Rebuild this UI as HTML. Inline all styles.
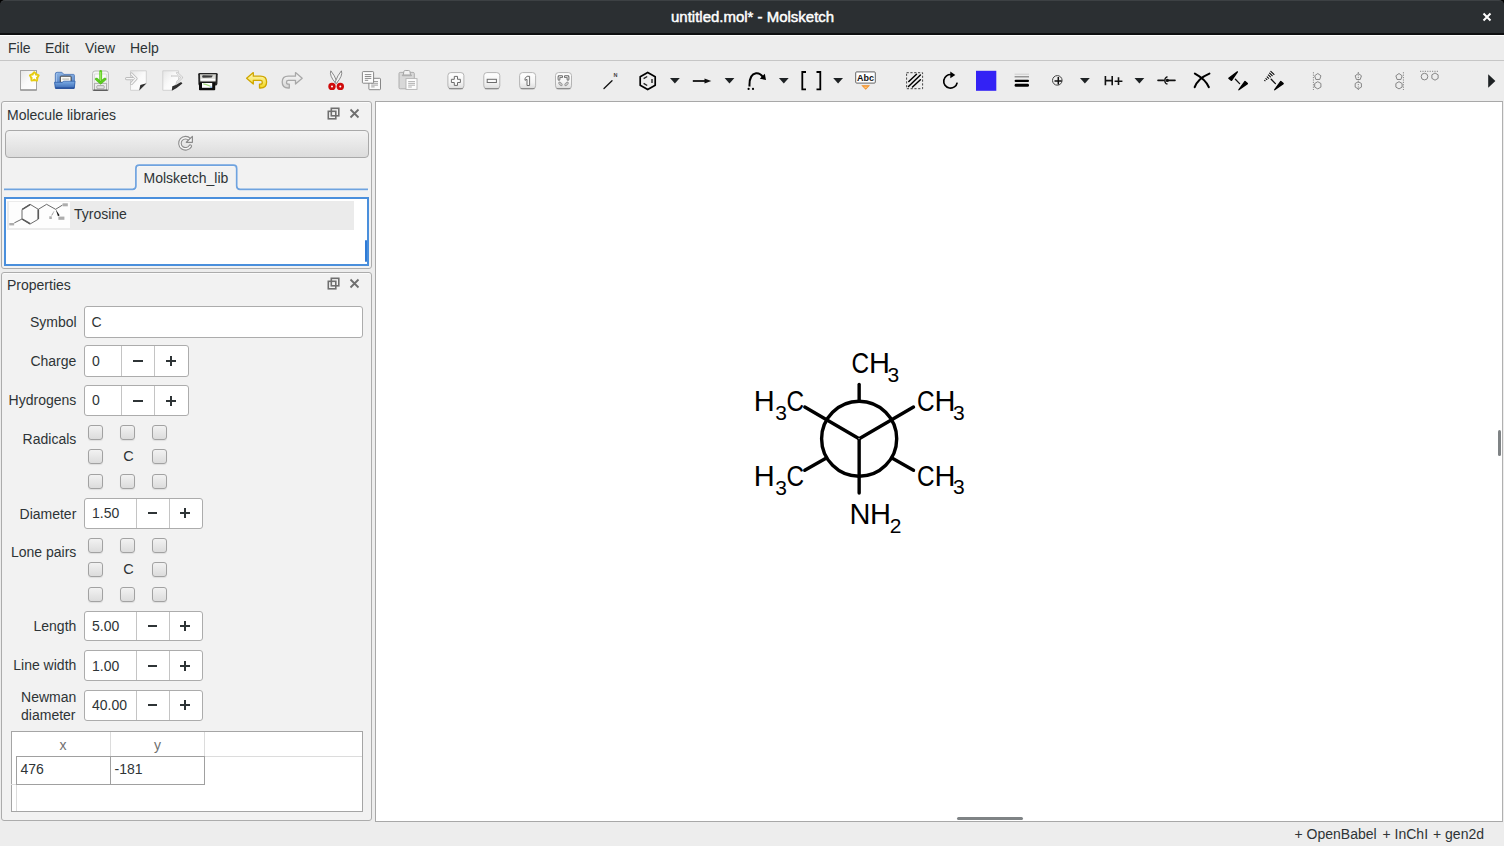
<!DOCTYPE html>
<html><head><meta charset="utf-8">
<style>
*{margin:0;padding:0;box-sizing:border-box}
html,body{width:1504px;height:846px;overflow:hidden;background:#ededed;font-family:"Liberation Sans",sans-serif;color:#2e3436;font-size:14px}
.a{position:absolute}
.t{position:absolute;white-space:nowrap;line-height:1}
svg{overflow:visible}
#title{left:0;top:0;width:1504px;height:35px;background:#2b2f32;border-top:1px solid #3d4144;border-bottom:2px solid #0e0f10;border-radius:5px 5px 0 0}
#menu{left:0;top:35px;width:1504px;height:26px;background:#ededed;border-top:1px solid #fff;border-bottom:1px solid #c6c6c6}
.dock{position:absolute;background:#f2f2f2;border:1px solid #acacac;border-radius:3px;box-shadow:inset 0 1px 0 #fbfbfb}
.spin{position:absolute;background:#fff;border:1px solid #acacac;border-radius:3px}
.cb{position:absolute;width:15px;height:15px;border:1px solid #a2a2a2;border-radius:3px;background:linear-gradient(#f2f2f2,#dcdcdc);box-shadow:0 1px 1px rgba(0,0,0,0.08)}
</style></head><body>
<div class="a" style="left:0;top:0;width:1504px;height:8px;background:#000"></div>
<div id="title" class="a"></div>
<div class="t" style="left:671.3px;top:10px;font-size:14.5px;color:#fff;-webkit-text-stroke:0.45px #fff;transform:scaleX(1.033);transform-origin:0 0">untitled.mol* - Molsketch</div>
<svg class="a" style="left:1480px;top:10px" width="14" height="14"><path d="M3.5 3.5 L10.5 10.5 M10.5 3.5 L3.5 10.5" stroke="#fff" stroke-width="2"/></svg>
<div id="menu" class="a"></div>
<div class="t" style="left:8px;top:41px">File</div>
<div class="t" style="left:45px;top:41px">Edit</div>
<div class="t" style="left:85px;top:41px">View</div>
<div class="t" style="left:130px;top:41px">Help</div>
<svg class="a" style="left:0;top:60px" width="1504" height="40" viewBox="0 60 1504 40"><defs>
<linearGradient id="gPage" x1="0" y1="0" x2="1" y2="1"><stop offset="0" stop-color="#e6e6e6"/><stop offset="0.5" stop-color="#fafafa"/><stop offset="1" stop-color="#ffffff"/></linearGradient>
<linearGradient id="gFold" x1="0" y1="0" x2="0" y2="1"><stop offset="0" stop-color="#7eaee6"/><stop offset="1" stop-color="#3a6ab5"/></linearGradient>
<linearGradient id="gFoldB" x1="0" y1="0" x2="0" y2="1"><stop offset="0" stop-color="#8cb4e4"/><stop offset="1" stop-color="#4d7cc4"/></linearGradient>
<linearGradient id="gBtn" x1="0" y1="0" x2="0" y2="1"><stop offset="0" stop-color="#ffffff"/><stop offset="0.6" stop-color="#f4f4f4"/><stop offset="1" stop-color="#dcdcdc"/></linearGradient>
<linearGradient id="gYel" x1="0" y1="0" x2="0" y2="1"><stop offset="0" stop-color="#fff9c0"/><stop offset="1" stop-color="#f2d820"/></linearGradient>
<linearGradient id="gGray" x1="0" y1="0" x2="0" y2="1"><stop offset="0" stop-color="#fafafa"/><stop offset="1" stop-color="#d6d6d6"/></linearGradient>
<linearGradient id="gGreen" x1="0" y1="0" x2="1" y2="0"><stop offset="0" stop-color="#4fc21a"/><stop offset="0.5" stop-color="#8ee84a"/><stop offset="1" stop-color="#45b512"/></linearGradient>
</defs>
<rect x="20.5" y="70.5" width="16" height="19.5" fill="url(#gPage)" stroke="#a3a3a3" stroke-width="1"/>
<path d="M20.5 90 H36.5" stroke="#8d8d8d" stroke-width="1.2"/>
<path d="M34.30 72.20 L36.18 74.21 L38.67 75.38 L37.34 77.79 L37.00 80.52 L34.30 80.00 L31.60 80.52 L31.26 77.79 L29.93 75.38 L32.42 74.21 Z" fill="#ecd21a" stroke="#e6cc12" stroke-width="2" stroke-linejoin="round"/><path d="M34.30 73.30 L35.30 75.52 L37.72 75.79 L35.92 77.43 L36.42 79.81 L34.30 78.60 L32.18 79.81 L32.68 77.43 L30.88 75.79 L33.30 75.52 Z" fill="#fff"/>
<path d="M55.3 87.5 L55.3 74 Q55.3 72.3 57 72.3 L61.3 72.3 Q62.3 72.3 63 73.4 L63.6 74.4 L73.4 74.4 Q74.4 74.4 74.4 75.4 L74.4 87.5 Z" fill="url(#gFoldB)" stroke="#4470b5" stroke-width="0.8"/>
<path d="M56.5 86 V74.5 Q56.5 73.5 57.5 73.5" fill="none" stroke="#a9c8ee" stroke-width="0.8"/>
<rect x="60.3" y="76.2" width="10.8" height="6.4" rx="0.6" fill="#fbfaf6" stroke="#2e2e2e" stroke-width="0.9"/>
<path d="M62.3 79.1 H69.2" stroke="#a8a8a0" stroke-width="0.9"/>
<path d="M54.5 82.3 L62.2 82.3 Q63 81.2 64.2 81.2 L75.1 81.2 L74.2 88.4 L55.5 88.4 Z" fill="url(#gFold)" stroke="#2f5ea8" stroke-width="0.8" stroke-linejoin="round"/>
<path d="M55.5 88.1 H74.2" stroke="#1d4592" stroke-width="1.1"/>
<path d="M92.6 90.3 L92.6 73.6 Q92.6 71 95 71 L106 71 Q108.4 71 108.4 73.6 L108.4 90.3 Z" fill="#f6f6f6" stroke="#b2b2b2" stroke-width="0.9"/>
<path d="M94.6 82.6 V74 H106.4 V82.6" fill="#fbfbfb" stroke="#d0d0d0" stroke-width="0.7"/>
<path d="M94.4 83.3 H106.6 V90 H94.4 Z" fill="#ececec" stroke="#8a8a8a" stroke-width="0.7"/>
<path d="M93.2 90.2 H107.8" stroke="#3a3a3a" stroke-width="1"/>
<rect x="96.8" y="85.6" width="7.4" height="3.2" rx="0.8" fill="#e2e2e2" stroke="#8f8f8f" stroke-width="0.7"/>
<path d="M100.7 71.4 L100.7 81" stroke="#5ccd1e" stroke-width="2.8" stroke-linecap="round"/>
<path d="M95.6 78.2 Q97.4 77.8 98.2 79 L100.7 81.2 L103.2 79 Q104 77.8 105.8 78.2 Q106.6 78.8 105.8 80 L100.7 84.2 L95.6 80 Q94.8 78.8 95.6 78.2 Z" fill="#5ccd1e" stroke="#43ae10" stroke-width="0.6"/>
<path d="M100.7 72 V81" stroke="#b4f080" stroke-width="0.8"/>
<path d="M130.5 70.8 L146.3 70.8 L146.3 83.5 L139.2 90.3 L130.5 90.3 Z" fill="url(#gPage)" stroke="#cfcfcf" stroke-width="0.9"/>
<path d="M139.2 90.5 L146.5 83.3 L140.3 85 Z" fill="#2e2e2e"/>
<path d="M126.6 78.6 H133.5 M131.5 74 L136 78.6 L131.5 83.4" fill="none" stroke="#bdbdbd" stroke-width="3.2" stroke-linecap="round" stroke-linejoin="round"/>
<path d="M126.6 78.6 H133.5 M131.5 74 L136 78.6 L131.5 83.4" fill="none" stroke="#f7f7f7" stroke-width="1.4" stroke-linecap="round" stroke-linejoin="round"/>
<path d="M162.8 70.8 L178.5 70.8 L178.5 80 L171.6 90.3 L162.8 90.3 Z" fill="url(#gPage)" stroke="#cfcfcf" stroke-width="0.9"/>
<path d="M171.8 90.7 Q177 88.5 182.4 83.6 Q182 82.2 180.5 82.3 Q176 85.5 172.3 86.2 Z" fill="#2f2f2f"/>
<path d="M172 76 H179 M177 72.8 L182 77.5 L177 82.4" fill="none" stroke="#c8c8c8" stroke-width="2.2" stroke-linecap="round" stroke-linejoin="round"/>
<path d="M172 76 H179 M177 72.8 L182 77.5 L177 82.4" fill="none" stroke="#fafafa" stroke-width="0.9" stroke-linecap="round" stroke-linejoin="round"/>
<defs><linearGradient id="gPr" x1="0" y1="0" x2="0" y2="1"><stop offset="0" stop-color="#cfcfca"/><stop offset="0.6" stop-color="#e4e4e0"/><stop offset="0.72" stop-color="#ffffff"/><stop offset="1" stop-color="#d8d8d4"/></linearGradient></defs>
<path d="M198.2 74.2 Q198.2 72.9 199.6 72.9 L216.3 72.9 Q217.7 72.9 217.7 74.2 L217.4 84 Q217 85.5 215.6 85.5 L199.8 85.5 Q198.5 85.5 198.4 84 Z" fill="#262626"/>
<path d="M200 74.3 L215.9 74.3 L215.6 81.6 L200.3 81.6 Z" fill="url(#gPr)"/>
<path d="M202.2 76.2 Q202.2 75.3 203.2 75.3 L212.8 75.4 L211.6 77.6 L203.2 77.8 Q202.2 77.8 202.2 77 Z" fill="#3c3c3c"/>
<rect x="199" y="82.6" width="16.2" height="7.6" rx="0.8" fill="#0c0c0c"/>
<rect x="202" y="83" width="10.2" height="4.8" fill="#fdfdfd"/>
<path d="M203.2 83.8 Q206 84.2 210.5 86.3" stroke="#a6dc80" stroke-width="1.2" fill="none"/>
<rect x="210.2" y="86.6" width="1.6" height="1.2" fill="#6aa0e8"/>
<path d="M246.6 78.3 L253.3 72.6 L253.3 76.2 L260.5 76.2 Q266.6 76.2 266.6 82 Q266.6 88 260.5 88 L259.5 88 L259.5 84.2 L260.5 84.2 Q262.3 84.2 262.3 82.2 Q262.3 80.4 260.5 80.4 L253.3 80.4 L253.3 84 Z" fill="url(#gYel)" stroke="#cfa600" stroke-width="1.3" stroke-linejoin="round"/>
<path d="M302.2 78.3 L295.5 72.6 L295.5 76.2 L288.3 76.2 Q282.2 76.2 282.2 82 Q282.2 88 288.3 88 L289.3 88 L289.3 84.2 L288.3 84.2 Q286.5 84.2 286.5 82.2 Q286.5 80.4 288.3 80.4 L295.5 80.4 L295.5 84 Z" fill="url(#gGray)" stroke="#a8a8a8" stroke-width="1.3" stroke-linejoin="round"/>
<path d="M330.8 70.8 Q329 75.5 335.8 83.4 L337.2 82.4 Q334.5 75 330.8 70.8 Z" fill="#f4f4f4" stroke="#6e6e6e" stroke-width="0.8"/>
<path d="M341.4 70.8 Q343.2 75.5 336.4 83.4 L335 82.4 Q337.7 75 341.4 70.8 Z" fill="#f4f4f4" stroke="#6e6e6e" stroke-width="0.8"/>
<circle cx="332" cy="86.4" r="3.7" fill="#cf0a0a"/><circle cx="340.3" cy="86.4" r="3.7" fill="#cf0a0a"/>
<circle cx="332" cy="86.4" r="1" fill="#fff"/><circle cx="340.3" cy="86.4" r="1" fill="#fff"/>
<rect x="368.9" y="78.3" width="11.6" height="11.4" rx="0.8" fill="#fcfcfc" stroke="#7a7a7a" stroke-width="0.9"/>
<path d="M371.2 81.5 H378 M371.2 83.3 H378 M371.2 85.1 H378 M371.2 86.9 H374.6" stroke="#8a8a8a" stroke-width="0.8"/>
<rect x="362.4" y="71.6" width="11.2" height="11.6" rx="0.8" fill="#fdfdfd" stroke="#7a7a7a" stroke-width="0.9"/>
<path d="M364.8 74.6 H371.3 M364.8 76.5 H371.3 M364.8 78.4 H371.3 M364.8 80.3 H368.2" stroke="#666" stroke-width="0.75"/>
<rect x="399" y="72.4" width="15.3" height="16.4" rx="1.2" fill="#d8d8d8" stroke="#a8a8a8" stroke-width="0.9"/>
<path d="M403.3 75.3 L403.8 71.6 Q404 70.5 405.2 70.5 L408.6 70.5 Q409.8 70.5 410 71.6 L410.5 75.3 Z" fill="#f2f2f2" stroke="#a4a4a4" stroke-width="1"/><rect x="401.8" y="74.6" width="10.2" height="1.6" rx="0.8" fill="#b0b0b0"/>
<rect x="406" y="78.6" width="11" height="10.8" fill="#fdfdfd" stroke="#b3b3b3" stroke-width="0.9"/>
<path d="M408.2 81.6 H415 M408.2 83.4 H415 M408.2 85.2 H415 M408.2 87 H411.8" stroke="#9a9a9a" stroke-width="0.75"/>
<rect x="447.9" y="72.6" width="16" height="16.2" rx="3" fill="url(#gBtn)" stroke="#b4b4b4" stroke-width="1"/>
<path d="M449.4 88.7 H462.4" stroke="#808080" stroke-width="1" stroke-linecap="round"/>
<path d="M454.29999999999995 76.4 h3.2 v2.9 h2.9 v3.2 h-2.9 v2.9 h-3.2 v-2.9 h-2.9 v-3.2 h2.9 Z" fill="#fafafa" stroke="#6c6c6c" stroke-width="1"/>
<rect x="483.8" y="72.6" width="16" height="16.2" rx="3" fill="url(#gBtn)" stroke="#b4b4b4" stroke-width="1"/>
<path d="M485.3 88.7 H498.3" stroke="#808080" stroke-width="1" stroke-linecap="round"/>
<rect x="487.2" y="79.30000000000001" width="9.2" height="3.2" fill="#fafafa" stroke="#6c6c6c" stroke-width="1"/>
<rect x="519.6" y="72.6" width="16" height="16.2" rx="3" fill="url(#gBtn)" stroke="#b4b4b4" stroke-width="1"/>
<path d="M521.1 88.7 H534.1" stroke="#808080" stroke-width="1" stroke-linecap="round"/>
<path d="M527.1 76.30000000000001 L529.6 76.30000000000001 L529.6 85.5 L527.0 85.5 L527.0 79.30000000000001 L525.0 80.30000000000001 L525.0 78.30000000000001 Z" fill="#fafafa" stroke="#6c6c6c" stroke-width="1"/>
<rect x="555.5" y="72.6" width="16" height="16.2" rx="3" fill="url(#gBtn)" stroke="#b4b4b4" stroke-width="1"/>
<path d="M557 88.7 H570" stroke="#808080" stroke-width="1" stroke-linecap="round"/>
<path d="M559.0 79.30000000000001 V76.7 H561.7 M565.3 76.7 H568.0 V79.30000000000001" fill="none" stroke="#666" stroke-width="2.8" stroke-linejoin="round" stroke-linecap="round"/>
<path d="M559.0 79.30000000000001 V76.7 H561.7 M565.3 76.7 H568.0 V79.30000000000001" fill="none" stroke="#f4f4f4" stroke-width="0.9" stroke-linejoin="round" stroke-linecap="round"/>
<path d="M559.6 83.10000000000001 L561.3 84.80000000000001 M567.4 83.10000000000001 L565.7 84.80000000000001" fill="none" stroke="#9a9a9a" stroke-width="2.8" stroke-linecap="round"/>
<path d="M559.6 83.10000000000001 L561.3 84.80000000000001 M567.4 83.10000000000001 L565.7 84.80000000000001" fill="none" stroke="#eee" stroke-width="0.9" stroke-linecap="round"/>
<path d="M604 88.5 L612 80.8" stroke="#111" stroke-width="1.3" stroke-linecap="round"/>
<text x="613.6" y="77.3" font-size="5.5" font-weight="bold" fill="#444" font-family="Liberation Sans">N</text>
<path d="M647.7 72.4 L655.2 76.7 L655.2 85.3 L647.7 89.6 L640.2 85.3 L640.2 76.7 Z" fill="none" stroke="#000" stroke-width="1.7" stroke-linejoin="round"/>
<path d="M643.6 78.6 L647.2 76.5 M652 78.9 V83.1 M643.6 83.4 L647.2 85.5" stroke="#222" stroke-width="1.4"/>
<path d="M670 78 L679.8 78 L674.9 83.4 Z" fill="#1e2224"/>
<path d="M724.6 78 L734.4 78 L729.5 83.4 Z" fill="#1e2224"/>
<path d="M778.9 78 L788.6999999999999 78 L783.8 83.4 Z" fill="#1e2224"/>
<path d="M833.2 78 L843.0 78 L838.1 83.4 Z" fill="#1e2224"/>
<path d="M1080 78 L1089.8 78 L1084.9 83.4 Z" fill="#1e2224"/>
<path d="M1134.5 78 L1144.3 78 L1139.4 83.4 Z" fill="#1e2224"/>
<path d="M692.8 81 L706 81" stroke="#111" stroke-width="1.8"/>
<path d="M704.5 78.6 L711.3 81 L704.5 83.4 Z" fill="#111"/>
<path d="M749.5 86.5 Q749 74.5 756 73.3 Q760.5 72.8 763.5 78" fill="none" stroke="#000" stroke-width="2"/>
<path d="M759.8 78.8 L766 80 L764.8 73.8 Z" fill="#000"/>
<circle cx="748.6" cy="88.9" r="1.1" fill="#000"/><circle cx="753" cy="88.9" r="1.1" fill="#000"/>
<path d="M806 72 H802.3 V89.3 H806 M816.5 72 H820.3 V89.3 H816.5" fill="none" stroke="#000" stroke-width="1.8"/>
<rect x="855.7" y="71.9" width="19.6" height="11.2" rx="1" fill="#fff" stroke="#555" stroke-width="0.9"/>
<text x="857" y="81.4" font-size="9" font-weight="bold" fill="#111" font-family="Liberation Sans" textLength="17" lengthAdjust="spacingAndGlyphs">Abc</text>
<path d="M861.3 85.2 L870 85.2 L865.7 89.8 Z" fill="#f08a1c"/>
<path d="M863.2 86.4 L868.1 86.4 L865.7 88.6 Z" fill="#ffc47a"/>
<rect x="906.6" y="72.7" width="16" height="16" fill="none" stroke="#444" stroke-width="1" stroke-dasharray="2.2 1.6"/>
<path d="M908.8 81.5 L916.5 74.3 M908.5 86.5 L920.4 75 M912.5 87 L920.4 79.8" stroke="#000" stroke-width="1.5" stroke-linecap="round"/>
<path d="M957.2 82.6 A6.8 6.8 0 1 1 951.5 74.6" fill="none" stroke="#000" stroke-width="1.7"/>
<path d="M950.3 71.5 L955.3 75 L950.3 78.3 Z" fill="#000"/>
<rect x="976" y="70.8" width="20.3" height="20" fill="#3322f5"/>
<path d="M1014.6 74.2 H1029" stroke="#c5c5c5" stroke-width="0.8"/>
<path d="M1014.6 76.8 H1029" stroke="#777" stroke-width="1.1"/>
<rect x="1014.6" y="79.7" width="14.4" height="2.2" rx="1" fill="#000"/>
<rect x="1014.6" y="83.8" width="14.4" height="3" rx="1.4" fill="#000"/>
<circle cx="1057.3" cy="80.4" r="4.8" fill="none" stroke="#444" stroke-width="1"/>
<path d="M1054.5 81 H1061.8 M1058.3 77 V84.6" stroke="#111" stroke-width="1.5"/>
<path d="M1105.4 76.1 V85.3 M1112.2 76.1 V85.3 M1105.4 80.6 H1112.2 M1114.6 81.2 H1122.4 M1118.5 77.3 V85.1" stroke="#111" stroke-width="1.6"/>
<path d="M1158 80.4 H1163.5 M1168 80.4 H1175" stroke="#111" stroke-width="1.6" stroke-linecap="round"/>
<path d="M1167.5 76.6 A4 4 0 0 0 1167.5 84.2" fill="none" stroke="#111" stroke-width="1.3"/>
<circle cx="1167.3" cy="80.4" r="1.6" fill="#111"/>
<path d="M1194.9 73.6 Q1205.8 79.5 1208.8 87.2 M1209.4 73.6 Q1197.8 78.5 1194.7 87.2" fill="none" stroke="#000" stroke-width="2.1" stroke-linecap="round"/>
<path d="M1237.4 71.8 L1228.8 78.2 L1231.5 80.4 Z" fill="#000" stroke="#000" stroke-width="1.3" stroke-linejoin="round"/>
<path d="M1235.4 79.3 L1239.6 83.6" stroke="#111" stroke-width="1.3" stroke-linecap="round"/>
<path d="M1238.8 89.8 L1247.4 83.6 L1245 81.4 Z" fill="#000" stroke="#000" stroke-width="1.3" stroke-linejoin="round"/>
<path d="M1264.69 80.39 L1265.11 80.81 M1265.91 78.59 L1266.89 79.53 M1267.14 76.78 L1268.66 78.26 M1268.37 74.98 L1270.43 76.98 M1269.60 73.17 L1272.20 75.71 M1270.82 71.36 L1273.98 74.44 " stroke="#000" stroke-width="1.05" stroke-linecap="round"/>
<path d="M1271.2 79.3 L1275.4 83.6" stroke="#111" stroke-width="1.3" stroke-linecap="round"/>
<path d="M1274.6 89.8 L1283.2 83.6 L1280.8 81.4 Z" fill="#000" stroke="#000" stroke-width="1.3" stroke-linejoin="round"/>
<g fill="none" stroke="#7a7a7a" stroke-width="0.9"><path d="M1317.80 73.50 L1320.94 75.78 L1319.74 79.47 L1315.86 79.47 L1314.66 75.78 Z"/><path d="M1317.80 88.90 L1314.68 87.10 L1314.68 83.50 L1317.80 81.70 L1320.92 83.50 L1320.92 87.10 Z"/></g>
<path d="M1313.4 72.2 V90" stroke="#7a7a7a" stroke-width="0.9" stroke-dasharray="1.2 1.2"/>
<g fill="none" stroke="#7a7a7a" stroke-width="0.9"><path d="M1358.30 73.50 L1361.44 75.78 L1360.24 79.47 L1356.36 79.47 L1355.16 75.78 Z"/><path d="M1358.30 88.90 L1355.18 87.10 L1355.18 83.50 L1358.30 81.70 L1361.42 83.50 L1361.42 87.10 Z"/></g>
<path d="M1358.3 72 V90" stroke="#7a7a7a" stroke-width="0.9" stroke-dasharray="1.2 1.2"/>
<g fill="none" stroke="#7a7a7a" stroke-width="0.9"><path d="M1399.00 73.50 L1402.14 75.78 L1400.94 79.47 L1397.06 79.47 L1395.86 75.78 Z"/><path d="M1399.00 88.90 L1395.88 87.10 L1395.88 83.50 L1399.00 81.70 L1402.12 83.50 L1402.12 87.10 Z"/></g>
<path d="M1403.4 72.2 V90" stroke="#7a7a7a" stroke-width="0.9" stroke-dasharray="1.2 1.2"/>
<g fill="none" stroke="#7a7a7a" stroke-width="0.9"><circle cx="1424.5" cy="76.6" r="3.3"/><path d="M1435.00 80.20 L1431.88 78.40 L1431.88 74.80 L1435.00 73.00 L1438.12 74.80 L1438.12 78.40 Z"/></g>
<path d="M1420 71.3 H1439" stroke="#7a7a7a" stroke-width="0.9" stroke-dasharray="1.2 1.2"/>
<path d="M1488.2 74.2 L1495.4 81 L1488.2 87.8 Z" fill="#1e2224"/>
</svg>
<!-- DOCK 1: Molecule libraries -->
<div class="dock" style="left:1px;top:101px;width:371px;height:168px"></div>
<div class="t" style="left:7px;top:107.5px">Molecule libraries</div>
<svg class="a" style="left:320px;top:104px" width="50" height="20" viewBox="0 0 50 20">
 <g fill="none" stroke="#6f6f6f" stroke-width="1.6">
  <rect x="8.3" y="7.3" width="7.5" height="7.5"/>
  <rect x="11.3" y="4.3" width="7.5" height="7.5"/>
 </g>
 <path d="M30.5 5.5 L38.5 13.5 M38.5 5.5 L30.5 13.5" stroke="#6f6f6f" stroke-width="1.8"/>
</svg>
<div class="a" style="left:5px;top:130px;width:364px;height:28px;border:1px solid #a9a9a9;border-radius:4px;background:linear-gradient(#f3f3f3,#dcdcdc)"></div>
<svg class="a" style="left:170px;top:130px" width="30" height="28" viewBox="170 130 30 28">
 <path d="M189.6 139.4 A5.6 5.6 0 1 0 190.3 146.2" fill="none" stroke="#8c8c8c" stroke-width="3.6" stroke-linecap="round"/>
 <path d="M189.6 139.4 A5.6 5.6 0 1 0 190.3 146.2" fill="none" stroke="#f6f6f6" stroke-width="1.5" stroke-linecap="round"/>
 <path d="M186.3 142.3 L192.4 142.3 L192.4 136.4 Z" fill="#f6f6f6" stroke="#8c8c8c" stroke-width="1.2" stroke-linejoin="round"/>
</svg>
<!-- tab bar -->
<svg class="a" style="left:0;top:160px" width="372" height="34" viewBox="0 160 372 34">
 <path d="M4 189.3 H132.6 Q135.9 189.3 135.9 186 V168.4 Q135.9 165.1 139.2 165.1 H233.4 Q236.7 165.1 236.7 168.4 V186 Q236.7 189.3 240 189.3 H368" fill="none" stroke="#ffffff" stroke-width="1" transform="translate(0.9,0.9)" opacity="0.7"/>
 <path d="M4 189.3 H132.6 Q135.9 189.3 135.9 186 V168.4 Q135.9 165.1 139.2 165.1 H233.4 Q236.7 165.1 236.7 168.4 V186 Q236.7 189.3 240 189.3 H368" fill="none" stroke="#6fa3df" stroke-width="1.7"/>
</svg>
<div class="t" style="left:143.5px;top:170.7px">Molsketch_lib</div>
<!-- list -->
<div class="a" style="left:4px;top:197px;width:365px;height:69px;background:#fff;border:2px solid #4a8fdc"></div>
<div class="a" style="left:7px;top:201px;width:347px;height:29px;background:#ebebeb"></div>
<div class="a" style="left:8.5px;top:201.5px;width:61px;height:26px;background:#fdfdfd"></div>
<svg class="a" style="left:0;top:199px" width="72" height="31" viewBox="0 199 72 31">
 <g fill="none" stroke="#5a5a5a" stroke-width="0.9" stroke-linejoin="round">
  <path d="M30.1 204.3 L38.3 209.3 L38.3 219.2 L30.1 224 L22 219 L22 209.5 Z"/>
  <path d="M22.3 209.4 L30.1 204.6 M22.3 219.1 L30.1 223.7 M38.3 209.6 V219" stroke-width="1.6"/>
  <path d="M22 219 L14.3 222.9"/>
  <path d="M38.3 209.3 L46.6 204.3 L55.6 209.3 L62.4 205.1"/>
  <path d="M53.8 211.7 L51.6 215.7" stroke-dasharray="0.8 0.6"/>
 </g>
 <path d="M55.6 209.3 L59.6 215.2 L58 216.2 Z" fill="#111"/>
 <g fill="#9a9a9a" opacity="0.8">
  <rect x="9.3" y="223" width="4.8" height="2.4"/>
  <rect x="62.6" y="203.3" width="5.2" height="3" />
  <rect x="49.3" y="216.3" width="2.5" height="2.7"/>
  <rect x="58.4" y="216.6" width="6" height="3.2"/>
 </g>
</svg>
<div class="t" style="left:74px;top:207px">Tyrosine</div>
<div class="a" style="left:364.5px;top:239.5px;width:2.5px;height:22px;background:#2f7bd6;border-radius:1px"></div>

<!-- DOCK 2: Properties -->
<div class="dock" style="left:1px;top:272px;width:371px;height:549px"></div>
<div class="t" style="left:7px;top:277.5px">Properties</div>
<svg class="a" style="left:320px;top:274px" width="50" height="20" viewBox="0 0 50 20">
 <g fill="none" stroke="#6f6f6f" stroke-width="1.6">
  <rect x="8.3" y="7.3" width="7.5" height="7.5"/>
  <rect x="11.3" y="4.3" width="7.5" height="7.5"/>
 </g>
 <path d="M30.5 5.5 L38.5 13.5 M38.5 5.5 L30.5 13.5" stroke="#6f6f6f" stroke-width="1.8"/>
</svg>
<div class="t" style="right:1427.4px;top:314.5px;text-align:right">Symbol</div>
<div class="a" style="left:84px;top:305.5px;width:278.5px;height:32px;background:#fff;border:1px solid #acacac;border-radius:3px"></div>
<div class="t" style="left:91.5px;top:314.5px">C</div>
<div class="t" style="right:1427.7px;top:354px;text-align:right">Charge</div>
<div class="spin" style="left:84.4px;top:345.4px;width:104.29999999999998px;height:31.200000000000045px"></div>
<div class="a" style="left:121px;top:346.4px;width:1px;height:29.200000000000045px;background:#c4c4c4"></div>
<div class="a" style="left:154px;top:346.4px;width:1px;height:29.200000000000045px;background:#c4c4c4"></div>
<div class="t" style="left:92px;top:353.8px">0</div>
<div class="a" style="left:133.25px;top:360.0px;width:9.5px;height:2px;background:#2e3436"></div>
<div class="a" style="left:166.04999999999998px;top:360.0px;width:10px;height:2px;background:#2e3436"></div>
<div class="a" style="left:170.04999999999998px;top:356.0px;width:2px;height:10px;background:#2e3436"></div>
<div class="t" style="right:1427.7px;top:393.3px;text-align:right">Hydrogens</div>
<div class="spin" style="left:84.4px;top:384.8px;width:104.29999999999998px;height:31.5px"></div>
<div class="a" style="left:121px;top:385.8px;width:1px;height:29.5px;background:#c4c4c4"></div>
<div class="a" style="left:154px;top:385.8px;width:1px;height:29.5px;background:#c4c4c4"></div>
<div class="t" style="left:92px;top:393.1px">0</div>
<div class="a" style="left:133.25px;top:399.55px;width:9.5px;height:2px;background:#2e3436"></div>
<div class="a" style="left:166.04999999999998px;top:399.55px;width:10px;height:2px;background:#2e3436"></div>
<div class="a" style="left:170.04999999999998px;top:395.55px;width:2px;height:10px;background:#2e3436"></div>
<div class="t" style="right:1427.7px;top:432.4px;text-align:right">Radicals</div>
<div class="cb" style="left:88px;top:425px"></div>
<div class="cb" style="left:120px;top:425px"></div>
<div class="cb" style="left:152px;top:425px"></div>
<div class="cb" style="left:88px;top:449.3px"></div>
<div class="t" style="left:123.2px;top:448.7px;font-size:14.5px">C</div>
<div class="cb" style="left:152px;top:449.3px"></div>
<div class="cb" style="left:88px;top:473.8px"></div>
<div class="cb" style="left:120px;top:473.8px"></div>
<div class="cb" style="left:152px;top:473.8px"></div>
<div class="t" style="right:1427.7px;top:506.8px;text-align:right">Diameter</div>
<div class="spin" style="left:84.3px;top:497.5px;width:118.3px;height:31.299999999999955px"></div>
<div class="a" style="left:135.5px;top:498.5px;width:1px;height:29.299999999999955px;background:#c4c4c4"></div>
<div class="a" style="left:168.5px;top:498.5px;width:1px;height:29.299999999999955px;background:#c4c4c4"></div>
<div class="t" style="left:92px;top:506.25px">1.50</div>
<div class="a" style="left:147.75px;top:512.15px;width:9.5px;height:2px;background:#2e3436"></div>
<div class="a" style="left:180.25px;top:512.15px;width:10px;height:2px;background:#2e3436"></div>
<div class="a" style="left:184.25px;top:508.15px;width:2px;height:10px;background:#2e3436"></div>
<div class="t" style="right:1427.7px;top:545px;text-align:right">Lone pairs</div>
<div class="cb" style="left:88px;top:538px"></div>
<div class="cb" style="left:120px;top:538px"></div>
<div class="cb" style="left:152px;top:538px"></div>
<div class="cb" style="left:88px;top:562.3px"></div>
<div class="t" style="left:123.2px;top:561.6999999999999px;font-size:14.5px">C</div>
<div class="cb" style="left:152px;top:562.3px"></div>
<div class="cb" style="left:88px;top:586.8px"></div>
<div class="cb" style="left:120px;top:586.8px"></div>
<div class="cb" style="left:152px;top:586.8px"></div>
<div class="t" style="right:1427.7px;top:619px;text-align:right">Length</div>
<div class="spin" style="left:84.3px;top:610.8px;width:118.3px;height:30.600000000000023px"></div>
<div class="a" style="left:135.5px;top:611.8px;width:1px;height:28.600000000000023px;background:#c4c4c4"></div>
<div class="a" style="left:168.5px;top:611.8px;width:1px;height:28.600000000000023px;background:#c4c4c4"></div>
<div class="t" style="left:92px;top:619px">5.00</div>
<div class="a" style="left:147.75px;top:625.0999999999999px;width:9.5px;height:2px;background:#2e3436"></div>
<div class="a" style="left:180.25px;top:625.0999999999999px;width:10px;height:2px;background:#2e3436"></div>
<div class="a" style="left:184.25px;top:621.0999999999999px;width:2px;height:10px;background:#2e3436"></div>
<div class="t" style="right:1427.7px;top:657.6px;text-align:right">Line width</div>
<div class="spin" style="left:84.3px;top:650px;width:118.3px;height:31px"></div>
<div class="a" style="left:135.5px;top:651px;width:1px;height:29px;background:#c4c4c4"></div>
<div class="a" style="left:168.5px;top:651px;width:1px;height:29px;background:#c4c4c4"></div>
<div class="t" style="left:92px;top:658.5px">1.00</div>
<div class="a" style="left:147.75px;top:664.5px;width:9.5px;height:2px;background:#2e3436"></div>
<div class="a" style="left:180.25px;top:664.5px;width:10px;height:2px;background:#2e3436"></div>
<div class="a" style="left:184.25px;top:660.5px;width:2px;height:10px;background:#2e3436"></div>
<div class="t" style="right:1427.7px;top:689.7px;text-align:right">Newman</div>
<div class="t" style="right:1428.5px;top:707.6px;text-align:right">diameter</div>
<div class="spin" style="left:84.3px;top:689.6px;width:118.3px;height:31.0px"></div>
<div class="a" style="left:135.5px;top:690.6px;width:1px;height:29.0px;background:#c4c4c4"></div>
<div class="a" style="left:168.5px;top:690.6px;width:1px;height:29.0px;background:#c4c4c4"></div>
<div class="t" style="left:92px;top:698px">40.00</div>
<div class="a" style="left:147.75px;top:704.1px;width:9.5px;height:2px;background:#2e3436"></div>
<div class="a" style="left:180.25px;top:704.1px;width:10px;height:2px;background:#2e3436"></div>
<div class="a" style="left:184.25px;top:700.1px;width:2px;height:10px;background:#2e3436"></div>
<div class="a" style="left:10.5px;top:731px;width:352.5px;height:81px;background:#fff;border:1px solid #a5a5a5"></div>
<div class="a" style="left:16px;top:756px;width:346px;height:1px;background:#dcdcdc"></div>
<div class="a" style="left:11px;top:784px;width:6px;height:1px;background:#dcdcdc"></div>
<div class="a" style="left:110px;top:732px;width:1px;height:24px;background:#dcdcdc"></div>
<div class="a" style="left:204px;top:732px;width:1px;height:24px;background:#dcdcdc"></div>
<div class="a" style="left:16px;top:756px;width:1px;height:55px;background:#dcdcdc"></div>
<div class="a" style="left:16px;top:756px;width:189px;height:29px;border:1px solid #a0a0a0"></div>
<div class="a" style="left:110px;top:756px;width:1px;height:29px;background:#a0a0a0"></div>
<div class="t" style="left:59.5px;top:738px;color:#707070">x</div>
<div class="t" style="left:154px;top:738px;color:#707070">y</div>
<div class="t" style="left:20.4px;top:761.8px">476</div>
<div class="t" style="left:114.6px;top:761.8px">-181</div>
<!-- canvas -->
<div class="a" style="left:375px;top:101px;width:1128px;height:721px;background:#fff;border:1px solid #a8a8a8;border-right-color:#b0b0b0"></div>
<div class="a" style="left:1498px;top:430px;width:3px;height:26px;background:#7f8385;border-radius:1.5px"></div>
<div class="a" style="left:957px;top:817px;width:66px;height:3px;background:#7f8385;border-radius:1.5px"></div>
<svg class="a" style="left:700px;top:330px" width="300" height="220" viewBox="700 330 300 220">
 <g stroke="#000" stroke-width="3.4" stroke-linecap="round" fill="none">
  <circle cx="859.15" cy="438.75" r="37.55"/>
  <path d="M859.15 438.75 L859.15 493.1"/>
  <path d="M859.15 438.75 L913.5 407"/>
  <path d="M859.15 438.75 L804.8 407"/>
  <path d="M859.15 384.4 L859.15 401.2"/>
  <path d="M892.8 458.6 L913.5 470.3"/>
  <path d="M825.5 458.6 L804.8 470.3"/>
 </g>
 <circle cx="859" cy="438.6" r="0.7" fill="#fff" opacity="0.85"/>
 <g font-family="Liberation Sans" fill="#000">
<text transform="translate(851.56,372.90) scale(0.84,1)" font-size="29">C</text>
<text x="869.02" y="373.20" font-size="29">H</text>
<text x="887.60" y="382.40" font-size="21">3</text>
<text x="753.82" y="410.90" font-size="29">H</text>
<text x="775.30" y="419.70" font-size="21">3</text>
<text transform="translate(786.56,410.70) scale(0.84,1)" font-size="29">C</text>
<text x="753.82" y="485.90" font-size="29">H</text>
<text x="775.30" y="494.90" font-size="21">3</text>
<text transform="translate(786.56,485.70) scale(0.84,1)" font-size="29">C</text>
<text transform="translate(916.96,410.70) scale(0.84,1)" font-size="29">C</text>
<text x="934.42" y="410.90" font-size="29">H</text>
<text x="953.00" y="419.80" font-size="21">3</text>
<text transform="translate(916.96,485.80) scale(0.84,1)" font-size="29">C</text>
<text x="934.42" y="486.10" font-size="29">H</text>
<text x="953.00" y="494.40" font-size="21">3</text>
<text x="849.42" y="523.70" font-size="29">N</text>
<text x="870.12" y="523.70" font-size="29">H</text>
<text x="889.85" y="532.60" font-size="21">2</text>
 </g>
</svg>
<div class="t" style="left:1294.5px;top:827.3px">+ OpenBabel</div><div class="t" style="left:1382.5px;top:827.3px">+ InChI</div><div class="t" style="left:1433px;top:827.3px">+ gen2d</div>
</body></html>
